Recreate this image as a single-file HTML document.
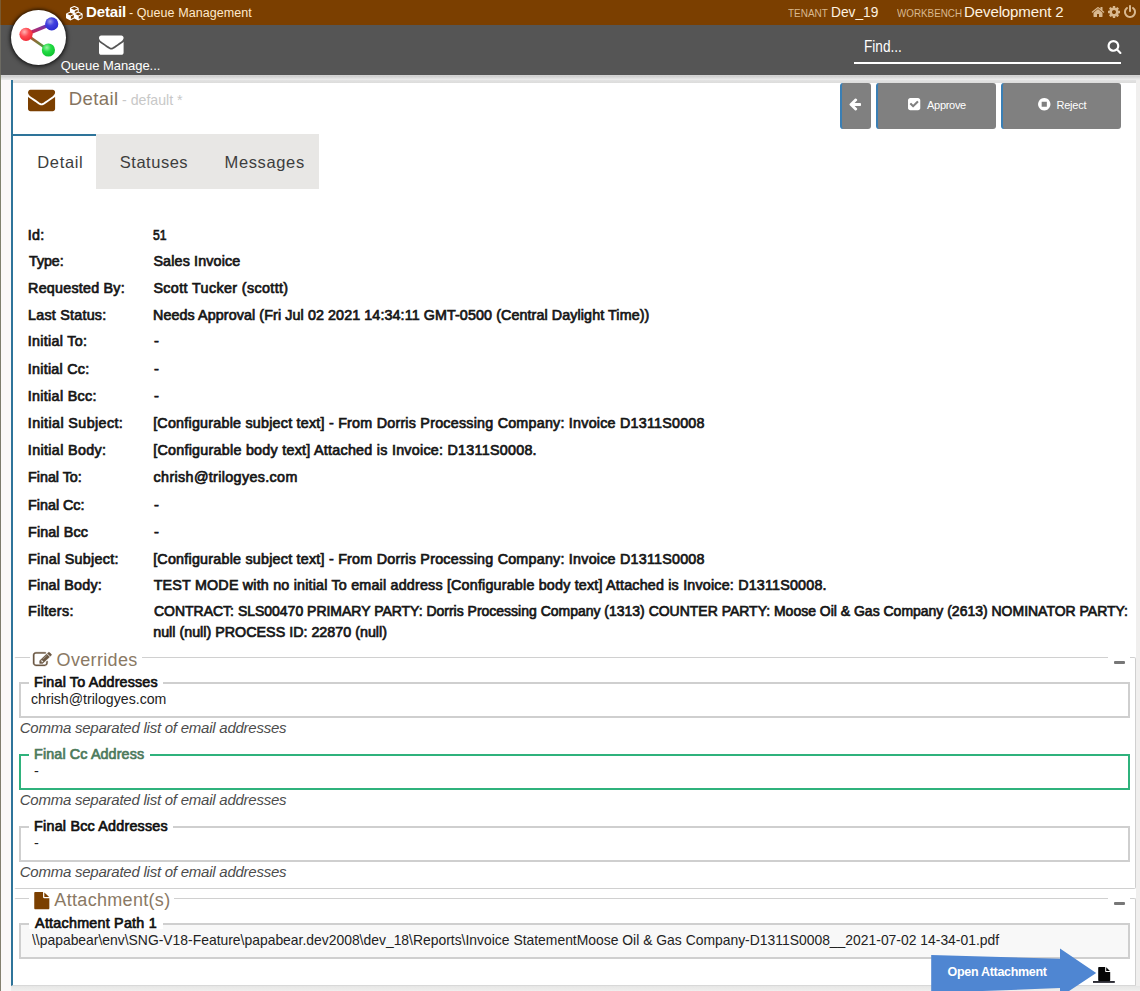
<!DOCTYPE html>
<html lang="en">
<head>
<meta charset="utf-8">
<title>Detail - Queue Management</title>
<style>
*{box-sizing:border-box;margin:0;padding:0}
html,body{width:1140px;height:991px;overflow:hidden;background:#fff}
body{position:relative;font-family:"Liberation Sans",sans-serif;color:#111;font-size:15px}
.t{position:absolute;white-space:pre;line-height:1;display:block}
.b{position:absolute;display:block}
svg.i{position:absolute;display:block;overflow:visible}
#topbar{left:0;top:0;width:1140px;height:25px;background:#7b3f00}
#navbar{left:0;top:25px;width:1140px;height:50px;background:#555}
#strip{left:0;top:75px;width:1140px;height:5px;background:linear-gradient(#d6d6d6 0,#cfcfcf 25%,#e2e2e2 70%,#ececec 100%)}
#ptop{left:13px;top:80px;width:1123px;height:3px;background:linear-gradient(#e3e3e3,#dcdcdb)}
#rightgut{left:1136px;top:80px;width:4px;height:911px;background:#f0efee}
#bottomgut{left:11px;top:986px;width:1129px;height:5px;background:linear-gradient(#e6e6e5,#efefee)}
#leftedge{left:0;top:0;width:1px;height:991px;background:linear-gradient(#7a5a30 0,#7a5a30 25px,#6c6a62 25px,#6c6a62 75px,#83856f 75px,#7d7a6c 50%,#85806f 100%)}
#leftgut{left:1px;top:80px;width:10px;height:911px;background:#fbf8f8}
#panel{left:11px;top:80px;width:1125px;height:906px;border-left:2px solid #2e749a;background:#fff;border-bottom:1px solid #d8d8d8}
#logo{left:11px;top:10px;width:55px;height:55px;border-radius:50%;background:#fff;box-shadow:0 0 3px 1px rgba(0,0,0,.5),0 1px 5px 1px rgba(0,0,0,.45)}
#findline{left:854px;top:62px;width:267px;height:2px;background:#fff}
.btn{top:83px;height:46px;background:#808080;border-left:2px solid #3a7fb5;border-radius:3px}
#tabbg{left:96px;top:134px;width:223px;height:55px;background:#e8e7e5}
#tabtop{left:13px;top:134px;width:83px;height:2px;background:#2e749a}
.fs{border:1px solid #d0d0d0;border-left-color:transparent;border-radius:2px}
.box{border:2px solid #cfcfcf;background:#fff}
.leg{background:#fff}
</style>
</head>
<body>
<div class="b" id="topbar"></div>
<div class="b" id="navbar"></div>
<div class="b" id="strip"></div>
<div class="b" id="rightgut"></div>
<div class="b" id="bottomgut"></div>
<div class="b" id="panel"></div>
<div class="b" id="ptop"></div>
<div class="b" id="leftgut"></div>
<div class="b" id="leftedge"></div>
<div class="b" id="logo"></div>
<svg class="i" style="left:11px;top:10px" width="55" height="55" viewBox="0 0 55 55">
<defs>
<radialGradient id="gr" cx="38%" cy="32%" r="70%"><stop offset="0" stop-color="#ffb4b4"/><stop offset=".5" stop-color="#ff4a52"/><stop offset="1" stop-color="#f02a36"/></radialGradient>
<radialGradient id="gb" cx="38%" cy="32%" r="70%"><stop offset="0" stop-color="#9a9ae8"/><stop offset=".45" stop-color="#4040e0"/><stop offset="1" stop-color="#2a2ad0"/></radialGradient>
<radialGradient id="gg" cx="38%" cy="32%" r="70%"><stop offset="0" stop-color="#a0f0a8"/><stop offset=".45" stop-color="#22dd44"/><stop offset="1" stop-color="#10c030"/></radialGradient>
<linearGradient id="l1" x1="0" y1="1" x2="1" y2="0"><stop offset="0" stop-color="#ee2233"/><stop offset="1" stop-color="#4a3ad0"/></linearGradient>
<linearGradient id="l2" x1="0" y1="0" x2="1" y2="1"><stop offset="0" stop-color="#d03a30"/><stop offset="1" stop-color="#30b040"/></linearGradient>
</defs>
<line x1="15" y1="24.3" x2="40.7" y2="13.9" stroke="url(#l1)" stroke-width="3.4"/>
<line x1="15" y1="24.3" x2="37.4" y2="40" stroke="url(#l2)" stroke-width="2.7"/>
<circle cx="15" cy="24.3" r="6.6" fill="url(#gr)"/>
<circle cx="40.7" cy="13.9" r="6.6" fill="url(#gb)"/>
<circle cx="37.4" cy="40" r="6.6" fill="url(#gg)"/>
</svg>
<!-- top bar icons -->
<svg class="i" style="left:65.6px;top:5.8px" width="17.6" height="14.4" viewBox="0 0 2304 1792" preserveAspectRatio="none"><path fill="#fff" d="M640 1632l384-192v-314l-384 164v342zm-64-454l404-173-404-173-404 173zm1088 454l384-192v-314l-384 164v342zm-64-454l404-173-404-173-404 173zm-448-293l384-165v-266l-384 164v267zm-64-379l441-189-441-189-441 189zm1088 518v416q0 36-19 67t-52 47l-448 224q-25 14-57 14t-57-14l-448-224q-4-2-7-4-2 2-7 4l-448 224q-25 14-57 14t-57-14l-448-224q-33-16-52-47t-19-67v-416q0-38 21.500-70t56.500-48l434-186v-400q0-38 21.500-70t56.500-48l448-192q23-10 50-10t50 10l448 192q35 16 56.500 48t21.500 70v400l434 186q36 16 57 48t21 70z"/></svg>
<svg class="i" style="left:1090.9px;top:5px" width="14" height="14" viewBox="0 0 1792 1792"><path fill="#d9b88f" d="M1472 992v480q0 26-19 45t-45 19h-384v-384h-256v384h-384q-26 0-45-19t-19-45v-480q0-1 .5-3t.5-3l575-474 575 474q1 2 1 6zm223-69l-62 74q-8 9-21 11h-3q-13 0-21-7l-692-577-692 577q-12 8-24 7-13-2-21-11l-62-74q-8-10-7-23.500t11-21.500l719-599q32-26 76-26t76 26l244 204v-195q0-14 9-23t23-9h192q14 0 23 9t9 23v408l219 182q10 8 11 21.500t-7 23.500z"/></svg>
<svg class="i" style="left:1107.1px;top:5px" width="14" height="14" viewBox="0 0 1792 1792"><path fill="#d9b88f" d="M1152 896q0-106-75-181t-181-75-181 75-75 181 75 181 181 75 181-75 75-181zm512-109v222q0 12-8 23t-20 13l-185 28q-19 54-39 91 35 50 107 138 10 12 10 25t-9 23q-27 37-99 108t-94 71q-12 0-26-9l-138-108q-44 23-91 38-16 136-29 186-7 28-36 28h-222q-14 0-24.500-8.500t-11.500-21.500l-28-184q-49-16-90-37l-141 107q-10 9-25 9-14 0-25-11-126-114-165-168-7-10-7-23 0-12 8-23 15-21 51-66.500t54-70.500q-27-50-41-99l-183-27q-13-2-21-12.500t-8-23.500v-222q0-12 8-23t19-13l186-28q14-46 39-92-40-57-107-138-10-12-10-24 0-10 9-23 26-36 98.500-107.500t94.500-71.500q13 0 26 10l138 107q44-23 91-38 16-136 29-186 7-28 36-28h222q14 0 24.500 8.500t11.500 21.500l28 184q49 16 90 37l142-107q9-9 24-9 13 0 25 10 129 119 165 170 7 8 7 22 0 12-8 23-15 21-51 66.500t-54 70.500q26 50 41 98l183 28q13 2 21 12.500t8 23.500z"/></svg>
<svg class="i" style="left:1122.6px;top:5px" width="14" height="14" viewBox="0 0 1792 1792"><path fill="#d9b88f" d="M1664 896q0 156-61 298t-164 245-245 164-298 61-298-61-245-164-164-245-61-298q0-182 80.500-343t226.500-270q43-32 95.500-25t83.500 50q32 42 24.500 94.500t-49.500 84.500q-98 74-151.500 181t-53.500 228q0 104 40.500 198.500t109.500 163.500 163.500 109.500 198.500 40.500 198.500-40.500 163.500-109.500 109.500-163.500 40.500-198.500q0-121-53.500-228t-151.500-181q-42-32-49.500-84.500t24.500-94.500q31-43 84-50t95 25q146 109 226.500 270t80.500 343zm-640-768v640q0 52-38 90t-90 38-90-38-38-90v-640q0-52 38-90t90-38 90 38 38 90z"/></svg>
<!-- nav bar -->
<svg class="i" style="left:98.6px;top:31.6px" width="24.6" height="24.6" viewBox="0 0 1792 1792"><path fill="#fff" d="M1792 710v794q0 66-47 113t-113 47h-1472q-66 0-113-47t-47-113v-794q44 49 101 87 362 246 497 345 57 42 92.500 65.500t94.500 48 110 24.500h2q51 0 110-24.500t94.500-48 92.500-65.500q170-123 498-345 57-39 100-87zm0-294q0 79-49 151t-122 123q-376 261-468 325-10 7-42.500 30.500t-54 38-52 32.500-57.500 27-50 9h-2q-23 0-50-9t-57.500-27-52-32.500-54-38-42.500-30.500q-91-64-262-182.500t-205-142.500q-62-42-117-115.500t-55-136.500q0-78 41.500-130t118.500-52h1472q65 0 112.500 47t47.500 113z"/></svg>
<div class="b" id="findline"></div>
<svg class="i" style="left:1107px;top:39.2px" width="15" height="15" viewBox="0 0 1792 1792"><path fill="#fff" d="M1216 832q0-185-131.500-316.500t-316.500-131.500-316.500 131.500-131.500 316.500 131.500 316.500 316.500 131.500 316.500-131.500 131.500-316.500zm512 832q0 52-38 90t-90 38q-54 0-90-38l-343-342q-179 124-399 124-143 0-273.500-55.500t-225-150-150-225-55.500-273.500 55.500-273.500 150-225 225-150 273.500-55.500 273.500 55.500 225 150 150 225 55.500 273.500q0 220-124 399l343 343q37 37 37 90z"/></svg>
<!-- panel header -->
<svg class="i" style="left:27.8px;top:85.9px" width="27.1" height="27.1" viewBox="0 0 1792 1792"><path fill="#7b3f00" d="M1792 710v794q0 66-47 113t-113 47h-1472q-66 0-113-47t-47-113v-794q44 49 101 87 362 246 497 345 57 42 92.500 65.500t94.500 48 110 24.500h2q51 0 110-24.500t94.500-48 92.500-65.500q170-123 498-345 57-39 100-87zm0-294q0 79-49 151t-122 123q-376 261-468 325-10 7-42.500 30.500t-54 38-52 32.500-57.500 27-50 9h-2q-23 0-50-9t-57.500-27-52-32.500-54-38-42.500-30.500q-91-64-262-182.500t-205-142.500q-62-42-117-115.500t-55-136.500q0-78 41.500-130t118.500-52h1472q65 0 112.500 47t47.500 113z"/></svg>
<div class="b btn" style="left:840px;width:31px"></div>
<div class="b btn" style="left:876px;width:120px"></div>
<div class="b btn" style="left:1001px;width:120px"></div>
<svg class="i" style="left:847.7px;top:96.6px" width="14" height="14" viewBox="0 0 1792 1792"><path fill="#fff" d="M1664 896v128q0 53-32.500 90.500t-84.500 37.500h-704l293 294q38 36 38 90t-38 90l-75 76q-37 37-90 37-52 0-91-37l-651-652q-37-37-37-90 0-52 37-91l651-650q38-38 91-38 52 0 90 38l75 74q38 38 38 91t-38 91l-293 293h704q52 0 84.500 37.500t32.500 90.500z"/></svg>
<svg class="i" style="left:906.9px;top:96.9px" width="14.3" height="14.3" viewBox="0 0 1792 1792"><path fill="#fff" d="M813 1299l614-614q19-19 19-45t-19-45l-102-102q-19-19-45-19t-45 19l-467 467-211-211q-19-19-45-19t-45 19l-102 102q-19 19-19 45t19 45l358 358q19 19 45 19t45-19zm851-883v960q0 119-84.500 203.500t-203.500 84.500h-960q-119 0-203.500-84.500t-84.500-203.500v-960q0-119 84.500-203.500t203.500-84.500h960q119 0 203.500 84.500t84.500 203.500z"/></svg>
<svg class="i" style="left:1036.5px;top:97px" width="14.5" height="14.5" viewBox="0 0 1792 1792"><path fill="#fff" d="M1216 1184v-576q0-14-9-23t-23-9h-576q-14 0-23 9t-9 23v576q0 14 9 23t23 9h576q14 0 23-9t9-23zm448-288q0 209-103 385.500t-279.500 279.500-385.500 103-385.500-103-279.500-279.500-103-385.500 103-385.500 279.500-279.500 385.500-103 385.500 103 279.500 279.500 103 385.500z"/></svg>
<!-- tabs -->
<div class="b" id="tabbg"></div>
<div class="b" id="tabtop"></div>
<!-- overrides fieldset -->
<div class="b fs" style="left:14px;top:657px;width:1122px;height:232px"></div>
<div class="b leg" style="left:29.5px;top:650px;width:112.5px;height:18px"></div>
<svg class="i" style="left:33.4px;top:650.6px" width="18.6" height="17.4" viewBox="0 0 1792 1792" preserveAspectRatio="none"><path fill="#6b5843" stroke="#6b5843" stroke-width="36" d="M888 1184l116-116-152-152-116 116v56h96v96h56zm440-720q-16-16-33 1l-350 350q-17 17-1 33t33-1l350-350q17-17 1-33zm80 594v190q0 119-84.500 203.500t-203.500 84.500h-832q-119 0-203.500-84.500t-84.500-203.500v-832q0-119 84.500-203.500t203.500-84.500h832q63 0 117 25 15 7 18 23 3 17-9 29l-49 49q-14 14-32 8-23-6-45-6h-832q-66 0-113 47t-47 113v832q0 66 47 113t113 47h832q66 0 113-47t47-113v-126q0-13 9-22l64-64q15-15 35-7t20 29zm-96-738l288 288-672 672h-288v-288zm444 132l-92 92-288-288 92-92q28-28 68-28t68 28l152 152q28 28 28 68t-28 68z"/></svg>
<div class="b leg" style="left:1108px;top:656px;width:22px;height:10px"></div>
<div class="b" style="left:1113.5px;top:660.6px;width:11.5px;height:3.1px;background:#777;border-radius:1px"></div>
<div class="b box" style="left:19px;top:682px;width:1111px;height:35.6px"></div>
<div class="b leg" style="left:29px;top:676px;width:134px;height:12px"></div>
<div class="b box" style="left:19px;top:754px;width:1111px;height:35.6px;border-color:#2fb27c"></div>
<div class="b leg" style="left:29px;top:748px;width:121px;height:12px"></div>
<div class="b box" style="left:19px;top:826px;width:1111px;height:35.6px"></div>
<div class="b leg" style="left:29px;top:820px;width:144px;height:12px"></div>
<!-- attachments fieldset -->
<div class="b fs" style="left:14px;top:898px;width:1122px;height:88px;border-bottom-color:transparent;border-radius:2px 2px 0 0"></div>
<div class="b leg" style="left:29px;top:890px;width:145px;height:20px"></div>
<svg class="i" style="left:32.8px;top:891.8px" width="17.6" height="17.2" viewBox="0 0 1792 1792" preserveAspectRatio="none"><path fill="#7b3f00" d="M1152 512v-472q22 14 36 28l408 408q14 14 28 36h-472zm-128 32q0 40 28 68t68 28h544v1056q0 40-28 68t-68 28h-1344q-40 0-68-28t-28-68v-1600q0-40 28-68t68-28h800v544z"/></svg>
<div class="b leg" style="left:1108px;top:897px;width:22px;height:10px"></div>
<div class="b" style="left:1113.5px;top:901.7px;width:11.5px;height:3.1px;background:#777;border-radius:1px"></div>
<div class="b box" style="left:19px;top:923px;width:1111px;height:35.8px;background:#f8f8f8"></div>
<div class="b leg" style="left:29px;top:917px;width:134px;height:12px"></div>
<div class="b" style="left:13px;top:985px;width:1123px;height:1px;background:#d8d8d8"></div>
<!-- open attachment callout -->
<svg class="i" style="left:0;top:0" width="1140" height="991" viewBox="0 0 1140 991">
<polygon points="931.2,955 1060,958.8 1060,948.6 1096.2,973 1060,997 1060,988 931.2,993" fill="#4f86d2"/>
<rect x="1093" y="981" width="21.8" height="1.9" fill="#2b2b33"/>
<g transform="translate(1097.2 967) scale(0.0078125)"><path fill="#060606" d="M1152 512v-472q22 14 36 28l408 408q14 14 28 36h-472zm-128 32q0 40 28 68t68 28h544v1056q0 40-28 68t-68 28h-1344q-40 0-68-28t-28-68v-1600q0-40 28-68t68-28h800v544z"/></g>
</svg>

<header aria-label="Application bar">
<span class="t" style="left:86.00px;top:4.00px;font-size:15px;color:#fff;font-weight:700;letter-spacing:-0.121px">Detail</span>
<span class="t" style="left:128.97px;top:7.00px;font-size:12.5px;color:#ffe9cc;letter-spacing:0.068px">- Queue Management</span>
<span class="t" style="left:788.32px;top:8.00px;font-size:10.5px;color:#d9b88f;transform:scaleX(0.9494);transform-origin:0 0">TENANT</span>
<span class="t" style="left:830.59px;top:4.00px;font-size:15px;color:#fff3e0;transform:scaleX(0.9144);transform-origin:0 0">Dev_19</span>
<span class="t" style="left:896.53px;top:8.00px;font-size:10.5px;color:#d9b88f;transform:scaleX(0.9367);transform-origin:0 0">WORKBENCH</span>
<span class="t" style="left:964.10px;top:4.00px;font-size:15px;color:#fff3e0;letter-spacing:-0.115px">Development 2</span>
</header>
<nav aria-label="Modules and search">
<span class="t" style="left:60.64px;top:59.00px;font-size:13px;color:#fff;letter-spacing:-0.054px">Queue Manage...</span>
<span class="t" style="left:863.80px;top:39.00px;font-size:16px;color:#fff;transform:scaleX(0.8507);transform-origin:0 0">Find...</span>
</nav>
<section aria-label="Detail header and actions">
<span class="t" style="left:68.75px;top:90.00px;font-size:18.6px;color:#857460;letter-spacing:0.345px">Detail</span>
<span class="t" style="left:121.73px;top:92.00px;font-size:15px;color:#c8c8c8;transform:scaleX(0.9438);transform-origin:0 0">- default *</span>
<span class="t" style="left:927.06px;top:100.00px;font-size:11px;color:#fff;letter-spacing:-0.297px">Approve</span>
<span class="t" style="left:1056.41px;top:100.00px;font-size:11px;color:#fff;letter-spacing:-0.187px">Reject</span>
</section>
<nav aria-label="Tabs">
<span class="t" style="left:37.16px;top:154.00px;font-size:16.5px;color:#3d3d3d;letter-spacing:0.690px">Detail</span>
<span class="t" style="left:119.80px;top:154.00px;font-size:16.5px;color:#3d3d3d;letter-spacing:0.514px">Statuses</span>
<span class="t" style="left:224.56px;top:154.00px;font-size:16.5px;color:#3d3d3d;letter-spacing:0.633px">Messages</span>
</nav>
<section aria-label="Detail fields">
<span class="t" style="left:27.80px;top:228.00px;font-size:14.3px;color:#161616;letter-spacing:0.265px;-webkit-text-stroke:0.7px #161616">Id:</span>
<span class="t" style="left:153.00px;top:228.00px;font-size:14.3px;color:#161616;-webkit-text-stroke:0.7px #161616;transform:scaleX(0.8502);transform-origin:0 0">51</span>
<span class="t" style="left:28.80px;top:254.00px;font-size:14.3px;color:#161616;-webkit-text-stroke:0.7px #161616;transform:scaleX(0.9926);transform-origin:0 0">Type:</span>
<span class="t" style="left:153.41px;top:254.00px;font-size:14.3px;color:#161616;letter-spacing:0.153px;-webkit-text-stroke:0.7px #161616">Sales Invoice</span>
<span class="t" style="left:28.11px;top:281.00px;font-size:14.3px;color:#161616;letter-spacing:0.229px;-webkit-text-stroke:0.7px #161616">Requested By:</span>
<span class="t" style="left:153.41px;top:281.00px;font-size:14.3px;color:#161616;letter-spacing:0.380px;-webkit-text-stroke:0.7px #161616">Scott Tucker (scottt)</span>
<span class="t" style="left:28.11px;top:308.00px;font-size:14.3px;color:#161616;letter-spacing:0.235px;-webkit-text-stroke:0.7px #161616">Last Status:</span>
<span class="t" style="left:153.01px;top:308.00px;font-size:14.3px;color:#161616;letter-spacing:0.097px;-webkit-text-stroke:0.7px #161616">Needs Approval (Fri Jul 02 2021 14:34:11 GMT-0500 (Central Daylight Time))</span>
<span class="t" style="left:27.80px;top:334.00px;font-size:14.3px;color:#161616;letter-spacing:0.302px;-webkit-text-stroke:0.7px #161616">Initial To:</span>
<span class="t" style="left:153.53px;top:334.00px;font-size:14.3px;color:#161616;-webkit-text-stroke:0.7px #161616;transform:scaleX(1.0278);transform-origin:0 0">-</span>
<span class="t" style="left:27.80px;top:362.00px;font-size:14.3px;color:#161616;letter-spacing:0.253px;-webkit-text-stroke:0.7px #161616">Initial Cc:</span>
<span class="t" style="left:153.53px;top:362.00px;font-size:14.3px;color:#161616;-webkit-text-stroke:0.7px #161616;transform:scaleX(1.0278);transform-origin:0 0">-</span>
<span class="t" style="left:27.80px;top:389.00px;font-size:14.3px;color:#161616;letter-spacing:0.314px;-webkit-text-stroke:0.7px #161616">Initial Bcc:</span>
<span class="t" style="left:153.53px;top:389.00px;font-size:14.3px;color:#161616;-webkit-text-stroke:0.7px #161616;transform:scaleX(1.0278);transform-origin:0 0">-</span>
<span class="t" style="left:27.80px;top:416.00px;font-size:14.3px;color:#161616;letter-spacing:0.402px;-webkit-text-stroke:0.7px #161616">Initial Subject:</span>
<span class="t" style="left:153.16px;top:416.00px;font-size:14.3px;color:#161616;letter-spacing:0.233px;-webkit-text-stroke:0.7px #161616">[Configurable subject text] - From Dorris Processing Company: Invoice D1311S0008</span>
<span class="t" style="left:27.80px;top:443.00px;font-size:14.3px;color:#161616;letter-spacing:0.356px;-webkit-text-stroke:0.7px #161616">Initial Body:</span>
<span class="t" style="left:153.16px;top:443.00px;font-size:14.3px;color:#161616;letter-spacing:0.266px;-webkit-text-stroke:0.7px #161616">[Configurable body text] Attached is Invoice: D1311S0008.</span>
<span class="t" style="left:28.11px;top:470.00px;font-size:14.3px;color:#161616;letter-spacing:-0.031px;-webkit-text-stroke:0.7px #161616">Final To:</span>
<span class="t" style="left:153.58px;top:470.00px;font-size:14.3px;color:#161616;letter-spacing:0.363px;-webkit-text-stroke:0.7px #161616">chrish@trilogyes.com</span>
<span class="t" style="left:28.11px;top:498.00px;font-size:14.3px;color:#161616;letter-spacing:-0.008px;-webkit-text-stroke:0.7px #161616">Final Cc:</span>
<span class="t" style="left:153.53px;top:498.00px;font-size:14.3px;color:#161616;-webkit-text-stroke:0.7px #161616;transform:scaleX(1.0278);transform-origin:0 0">-</span>
<span class="t" style="left:28.11px;top:525.00px;font-size:14.3px;color:#161616;letter-spacing:0.113px;-webkit-text-stroke:0.7px #161616">Final Bcc</span>
<span class="t" style="left:153.53px;top:525.00px;font-size:14.3px;color:#161616;-webkit-text-stroke:0.7px #161616;transform:scaleX(1.0278);transform-origin:0 0">-</span>
<span class="t" style="left:28.11px;top:552.00px;font-size:14.3px;color:#161616;letter-spacing:0.280px;-webkit-text-stroke:0.7px #161616">Final Subject:</span>
<span class="t" style="left:153.16px;top:552.00px;font-size:14.3px;color:#161616;letter-spacing:0.233px;-webkit-text-stroke:0.7px #161616">[Configurable subject text] - From Dorris Processing Company: Invoice D1311S0008</span>
<span class="t" style="left:28.11px;top:578.00px;font-size:14.3px;color:#161616;letter-spacing:0.214px;-webkit-text-stroke:0.7px #161616">Final Body:</span>
<span class="t" style="left:153.70px;top:578.00px;font-size:14.3px;color:#161616;letter-spacing:0.198px;-webkit-text-stroke:0.7px #161616">TEST MODE with no initial To email address [Configurable body text] Attached is Invoice: D1311S0008.</span>
<span class="t" style="left:28.11px;top:604.00px;font-size:14.3px;color:#161616;letter-spacing:0.340px;-webkit-text-stroke:0.7px #161616">Filters:</span>
<span class="t" style="left:153.58px;top:604.00px;font-size:14.3px;color:#161616;-webkit-text-stroke:0.7px #161616;transform:scaleX(0.9778);transform-origin:0 0">CONTRACT: SLS00470 PRIMARY PARTY: Dorris Processing Company (1313) COUNTER PARTY: Moose Oil &amp; Gas Company (2613) NOMINATOR PARTY:</span>
<span class="t" style="left:153.20px;top:625.00px;font-size:14.3px;color:#161616;letter-spacing:0.005px;-webkit-text-stroke:0.7px #161616">null (null) PROCESS ID: 22870 (null)</span>
</section>
<section aria-label="Overrides">
<span class="t" style="left:56.62px;top:651.00px;font-size:18px;color:#8a7964;letter-spacing:0.331px">Overrides</span>
<span class="t" style="left:34.11px;top:675.00px;font-size:14.3px;color:#111;letter-spacing:0.177px;-webkit-text-stroke:0.7px #111">Final To Addresses</span>
<span class="t" style="left:31.04px;top:691.00px;font-size:15px;color:#222;transform:scaleX(0.9426);transform-origin:0 0">chrish@trilogyes.com</span>
<span class="t" style="left:19.72px;top:720.00px;font-size:15px;color:#4c4c4c;font-style:italic;letter-spacing:-0.239px">Comma separated list of email addresses</span>
<span class="t" style="left:34.11px;top:747.00px;font-size:14.3px;color:#4d7a5c;letter-spacing:0.128px;-webkit-text-stroke:0.7px #4d7a5c">Final Cc Address</span>
<span class="t" style="left:34.23px;top:763.00px;font-size:15px;color:#222;transform:scaleX(0.9595);transform-origin:0 0">-</span>
<span class="t" style="left:19.72px;top:792.00px;font-size:15px;color:#4c4c4c;font-style:italic;letter-spacing:-0.239px">Comma separated list of email addresses</span>
<span class="t" style="left:34.11px;top:819.00px;font-size:14.3px;color:#111;letter-spacing:0.223px;-webkit-text-stroke:0.7px #111">Final Bcc Addresses</span>
<span class="t" style="left:34.23px;top:835.00px;font-size:15px;color:#222;transform:scaleX(0.9595);transform-origin:0 0">-</span>
<span class="t" style="left:19.72px;top:864.00px;font-size:15px;color:#4c4c4c;font-style:italic;letter-spacing:-0.239px">Comma separated list of email addresses</span>
</section>
<section aria-label="Attachments">
<span class="t" style="left:54.37px;top:891.00px;font-size:18px;color:#8a7964;letter-spacing:0.315px">Attachment(s)</span>
<span class="t" style="left:35.12px;top:916.00px;font-size:14.3px;color:#111;letter-spacing:0.248px;-webkit-text-stroke:0.7px #111">Attachment Path 1</span>
<span class="t" style="left:31.91px;top:932.00px;font-size:15px;color:#222;transform:scaleX(0.9266);transform-origin:0 0">\\papabear\env\SNG-V18-Feature\papabear.dev2008\dev_18\Reports\Invoice StatementMoose Oil &amp; Gas Company-D1311S0008__2021-07-02 14-34-01.pdf</span>
<span class="t" style="left:947.54px;top:966.00px;font-size:12.5px;color:#fff;font-weight:700;letter-spacing:-0.306px">Open Attachment</span>
</section>
</body>
</html>
